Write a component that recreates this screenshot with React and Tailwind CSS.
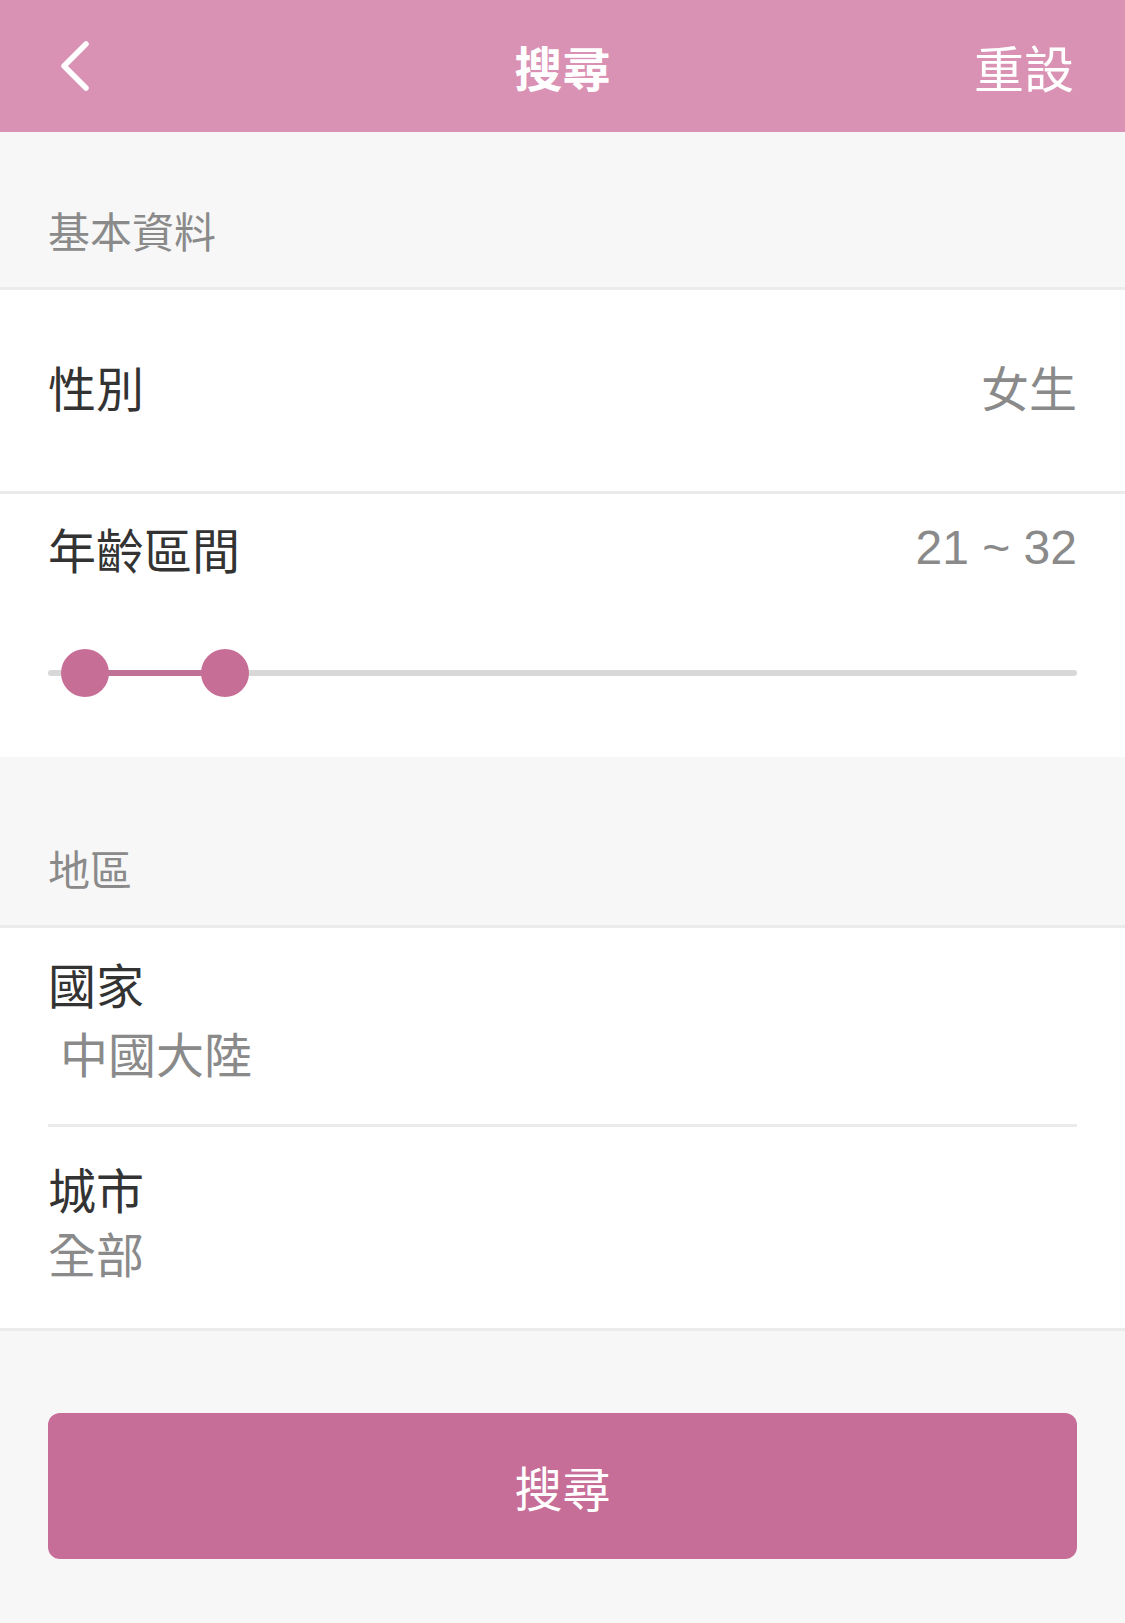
import { useState } from 'react';

const font = { fontFamily: '"Noto Sans CJK TC", "Noto Sans", sans-serif' };

// thumb centres measured along a 1029px track: 20 years -> 24px, 97 years -> 1005px
function AgeSlider({ min = 20, max = 97, low, high }) {
  const pos = (v) => 24 + ((v - min) / (max - min)) * 981;
  return (
    <div className="relative mx-[48px] h-[48px]">
      <div className="absolute left-0 right-0 top-[21px] h-[6px] rounded-full bg-[#d8d8d8]" />
      <div
        className="absolute top-[21px] h-[6px] bg-[#bf7197]"
        style={{ left: pos(low), width: pos(high) - pos(low) }}
      />
      <div
        className="absolute top-0 h-[48px] w-[48px] rounded-full bg-[#c76e97]"
        style={{ left: pos(low) - 24 }}
      />
      <div
        className="absolute top-0 h-[48px] w-[48px] rounded-full bg-[#c76e97]"
        style={{ left: pos(high) - 24 }}
      />
    </div>
  );
}

export default function App() {
  const [age] = useState({ low: 21, high: 32 });

  return (
    <div className="min-h-[1623px] w-[1125px] bg-[#f7f7f7]" style={font}>
      {/* header */}
      <div className="grid h-[132px] grid-cols-3 items-center bg-[#d992b3] px-[51px] text-white">
        <div className="flex items-center">
          <svg width="36" height="52" viewBox="0 0 36 52" className="ml-[6px]">
            <path d="M29 4 L7 26 L29 48" fill="none" stroke="white" strokeWidth="5.5" strokeLinecap="round" strokeLinejoin="round" />
          </svg>
        </div>
        <div className="text-center text-[48px] font-bold leading-none">搜尋</div>
        <div className="text-right text-[50px] leading-none">重設</div>
      </div>

      {/* 基本資料 */}
      <div className="flex h-[155px] items-end px-[48px] pb-[32px] text-[42px] leading-[50px] text-[#8a8a8a]">基本資料</div>
      <div className="border-t-[3px] border-[#ebebeb] bg-white">
        <div className="flex h-[201px] items-center justify-between px-[48px] pb-[10px] text-[48px] leading-none">
          <span className="text-[#333333]">性別</span>
          <span className="text-[#8a8a8a]">女生</span>
        </div>
      </div>
      <div className="border-t-[3px] border-[#ebebeb] bg-white pt-[26px] pb-[60px]">
        <div className="flex items-center justify-between px-[48px] leading-[56px]">
          <span className="text-[48px] text-[#333333]">年齡區間</span>
          <span className="text-[48px] text-[#8a8a8a]" style={{ fontFamily: '"Liberation Sans", sans-serif' }}>
            {age.low} ~ {age.high}
          </span>
        </div>
        <div className="mt-[73px]">
          <AgeSlider low={age.low} high={age.high} />
        </div>
      </div>

      {/* 地區 */}
      <div className="flex h-[168px] items-end px-[48px] pb-[32px] text-[42px] leading-[50px] text-[#8a8a8a]">地區</div>
      <div className="border-t-[3px] border-b-[3px] border-[#ebebeb] bg-white px-[48px]">
        <div className="flex h-[199px] flex-col justify-center border-b-[3px] border-[#ebebeb] pb-[12px]">
          <span className="text-[48px] leading-[64px] text-[#333333]">國家</span>
          <span className="pl-[12px] text-[48px] leading-[74px] text-[#8a8a8a]">中國大陸</span>
        </div>
        <div className="flex h-[201px] flex-col justify-center pb-[16px]">
          <span className="text-[48px] leading-[64px] text-[#333333]">城市</span>
          <span className="text-[48px] leading-[64px] text-[#8a8a8a]">全部</span>
        </div>
      </div>

      <div className="px-[48px] pt-[82px] pb-[64px]">
        <button className="flex h-[146px] w-full items-center justify-center rounded-[12px] bg-[#c76e98] text-[48px] text-white">
          搜尋
        </button>
      </div>
    </div>
  );
}
